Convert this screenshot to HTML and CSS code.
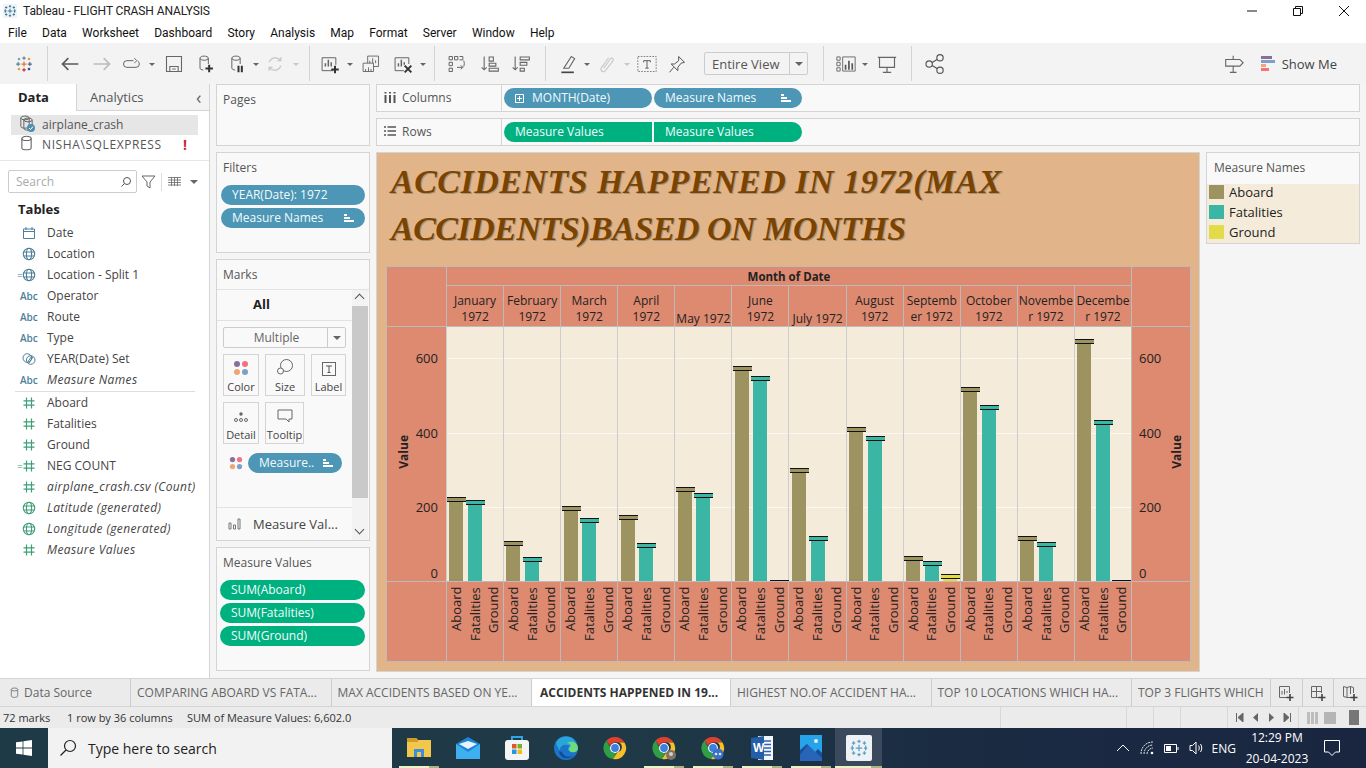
FILE: index.html
```html
<!DOCTYPE html>
<html lang="en">
<head>
    <meta charset="UTF-8">
    <title>Tableau - FLIGHT CRASH ANALYSIS</title>
    <link rel="stylesheet" href="styles.css">
</head>
<body>
<svg class="defs" width="0" height="0">
    <symbol id="crosses" viewBox="0 0 24 24">
        <path d="M12 8v8M8 12h8M12 2v4M10 4h4M12 18v4M10 20h4M4 9v6M2 12h4M20 9v6M18 12h4M5.500 4v4M3.500 6h4M18.500 4v4M16.500 6h4M5.500 16v4M3.500 18h4M18.500 16v4M16.500 18h4" fill="none" stroke="currentColor" stroke-width="1.500"/>
    </symbol>
    <symbol id="globe" viewBox="0 0 14 14">
        <g fill="none" stroke="currentColor" stroke-width="1.100"><circle cx="7" cy="7" r="5.700"/><ellipse cx="7" cy="7" rx="2.600" ry="5.700"/><path d="M1.500 5h11M1.500 9h11"/></g>
    </symbol>
    <symbol id="hash" viewBox="0 0 14 14">
        <path d="M4.500 1.500v11M9.500 1.500v11M1.500 4.800h11M1.500 9.200h11" fill="none" stroke="currentColor" stroke-width="1.200"/>
    </symbol>
    <symbol id="sorted" viewBox="0 0 12 10">
        <path d="M1 1h3v2H1zM1 4h6v2H1zM1 7h10v2H1z" fill="currentColor"/>
    </symbol>
    <symbol id="can" viewBox="0 0 14 18">
        <g fill="none" stroke="currentColor" stroke-width="1.200"><ellipse cx="7" cy="3.500" rx="5" ry="2.300"/><path d="M2 3.500v10c0 1.500 2 2.300 5 2.300s5-.8 5-2.300v-10"/></g>
    </symbol>
    <symbol id="chrome" viewBox="0 0 24 24">
        <path d="M12 1a11 11 0 0 1 9.500 5.500H12a5.500 5.500 0 0 0-5 3.200L3.500 4.500A11 11 0 0 1 12 1z" fill="#e0412f"/>
        <path d="M3.500 4.500L7.400 12a5 5 0 0 0 5.900 5L10 23A11 11 0 0 1 3.500 4.500z" fill="#2f9e44"/>
        <path d="M21.500 6.500A11 11 0 0 1 10 23l4.600-7a5 5 0 0 0 1.300-9.500z" fill="#f6c026"/>
        <circle cx="12" cy="12" r="5" fill="#fff"/><circle cx="12" cy="12" r="3.900" fill="#3d7fe0"/>
    </symbol>
</svg>

<div class="titlebar">
    <svg class="app-ico" viewBox="0 0 24 24"><rect width="24" height="24" fill="#eef3f6"/><use href="#crosses" width="24" height="24" class="navy"/></svg>
    <span class="app-title">Tableau - FLIGHT CRASH ANALYSIS</span>
    <div class="win">
        <svg viewBox="0 0 12 12"><path d="M1 6h10" stroke="#111" fill="none"/></svg>
        <svg viewBox="0 0 12 12"><path d="M1.500 3.500h7v7h-7zM3.500 3.500v-2h7v7h-2" stroke="#111" fill="none"/></svg>
        <svg viewBox="0 0 12 12"><path d="M1 1l10 10M11 1L1 11" stroke="#111" fill="none"/></svg>
    </div>
</div>
<nav class="menubar">
    <span>File</span><span>Data</span><span>Worksheet</span><span>Dashboard</span><span>Story</span><span>Analysis</span><span>Map</span><span>Format</span><span>Server</span><span>Window</span><span>Help</span>
</nav>

<div class="toolbar">
    <svg class="ico ml12" viewBox="0 0 24 24"><g fill="none" stroke-width="1.500"><path d="M12 9v6M9 12h6" stroke="#e8762c"/><path d="M12 3v4M10 5h4" stroke="#5b879b"/><path d="M12 17v4M10 19h4" stroke="#c72035"/><path d="M5 9.500v5M2.500 12h5" stroke="#59879b"/><path d="M19 9.500v5M16.500 12h5" stroke="#5b6591"/><path d="M6 4.500v3M4.500 6h3" stroke="#7099a6"/><path d="M18 4.500v3M16.500 6h3" stroke="#eb912b"/><path d="M6 16.500v3M4.500 18h3" stroke="#eb912b"/><path d="M18 16.500v3M16.500 18h3" stroke="#1f447a"/></g></svg>
    <i class="sep ml11"></i>
    <svg class="ico ml10" viewBox="0 0 24 24"><path d="M22 12H3M10 5l-7 7 7 7" fill="none" stroke="#5a5a5a" stroke-width="2"/></svg>
    <svg class="ico ml8" viewBox="0 0 24 24"><path d="M2 12h19M14 5l7 7-7 7" fill="none" stroke="#bcbcbc" stroke-width="2"/></svg>
    <svg class="ico ml5" viewBox="0 0 24 24"><path d="M15 8H7a4 4 0 0 0 0 8h11a4 4 0 0 0 4-4 4 4 0 0 0-2-3.500M16 5l3 3-3 3" fill="none" stroke="#666" stroke-width="1.200"/></svg>
    <i class="caret ml5"></i>
    <svg class="ico ml6" viewBox="0 0 24 24"><path d="M3 3h18v18H3zM7 21v-6h10v6M10 18h4" fill="none" stroke="#666" stroke-width="1.300"/></svg>
    <svg class="ico ml7" viewBox="0 0 24 24"><g fill="none"><path d="M16 12V5c0-1.500-2.500-2.500-5-2.500S6 3.500 6 5v12c0 1.200 2 2 4 2.300M6 5c0 1.500 2.500 2.500 5 2.500S16 6.500 16 5" stroke="#666" stroke-width="1.200"/><path d="M17 13v9M12.500 17.500h9" stroke="#333" stroke-width="2.400"/></g></svg>
    <svg class="ico ml7" viewBox="0 0 24 24"><g fill="none"><path d="M17 12V5c0-1.500-2.500-2.500-5-2.500S7 3.500 7 5v12c0 1.200 2 2 4 2.300M7 5c0 1.500 2.500 2.500 5 2.500S17 6.500 17 5" stroke="#666" stroke-width="1.200"/><path d="M15 14v8M19 14v8" stroke="#333" stroke-width="2.400"/></g></svg>
    <i class="caret ml4"></i>
    <svg class="ico ml3" viewBox="0 0 24 24"><path d="M5 10a8 8 0 0 1 14-2M19 14a8 8 0 0 1-14 2M19 4v4h-4M5 20v-4h4" fill="none" stroke="#c6c6c6" stroke-width="1.500"/></svg>
    <i class="caret off ml5"></i>
    <i class="sep ml9"></i>
    <svg class="ico ml8" viewBox="0 0 24 24"><g fill="none"><path d="M16 20H2.500V4.500H19V13" stroke="#666" stroke-width="1.200"/><path d="M6.500 15v-4M10 15V7M13.500 15v-5" stroke="#666" stroke-width="1.800"/><path d="M18 14v9M13.500 18.500h9" stroke="#333" stroke-width="2.400"/></g></svg>
    <i class="caret ml4"></i>
    <svg class="ico ml5" viewBox="0 0 24 24"><path d="M8 11V2.500h13V15h-6M10.500 11V8M14 11V5M17.500 11V7.500M2.500 11H15v10H2.500zM5.500 21v-3M9 21v-5M12 21v-3" fill="none" stroke="#666" stroke-width="1.100"/></svg>
    <svg class="ico ml8" viewBox="0 0 24 24"><g fill="none"><path d="M13 20H2.500V4.500H19V12" stroke="#666" stroke-width="1.200"/><path d="M6.500 15v-4M10 15V7M13.500 13V10" stroke="#666" stroke-width="1.800"/><path d="M14 14l8 8M22 14l-8 8" stroke="#333" stroke-width="2.400"/></g></svg>
    <i class="caret ml4"></i>
    <i class="sep ml7"></i>
    <svg class="ico ml10" viewBox="0 0 24 24"><path d="M2.500 3h4v4h-4zM9 3h4v4H9zM2.500 10h4v4h-4zM2.500 17h4v4h-4zM15 3h4v4h-4M12 16h7l-2.500-2.500M19 16l-2.500 2.500M20 8c1 2 1 5 0 7" fill="none" stroke="#666" stroke-width="1.200"/></svg>
    <svg class="ico ml9" viewBox="0 0 24 24"><path d="M5 3v16M2 16l3 3 3-3M11 3.500h5v5h-5zM11 11h8v3.500h-8zM11 17h11v3.500H11z" fill="none" stroke="#666" stroke-width="1.300"/></svg>
    <svg class="ico ml7" viewBox="0 0 24 24"><path d="M5 3v16M2 16l3 3 3-3M11 3.500h11V7H11zM11 10h8v3.500h-8zM11 17h5v3.500h-5z" fill="none" stroke="#666" stroke-width="1.300"/></svg>
    <i class="sep ml12"></i>
    <svg class="ico ml10" viewBox="0 0 24 24"><path d="M7 17L16 3l4 2.500-7 11.500z" fill="none" stroke="#666" stroke-width="1.300"/><path d="M4 22h15" stroke="#444" stroke-width="2"/></svg>
    <i class="caret ml1"></i>
    <svg class="ico ml4" viewBox="0 0 24 24"><path d="M8 17l8-11c2-2.500 5 0 3 2.500L10 20c-3 3-7-.5-4.500-4L14 4.500" fill="none" stroke="#c9c9c9" stroke-width="1.400"/></svg>
    <i class="caret off ml4"></i>
    <svg class="ico ml4" viewBox="0 0 24 24"><rect x="1" y="3" width="22" height="18" fill="none" stroke="#777" stroke-width="1.100" stroke-dasharray="2 1.500"/><path d="M8 8h8M12 8v9M10 17h4M8 8v2M16 8v2" fill="none" stroke="#555" stroke-width="1.100"/></svg>
    <svg class="ico ml6" viewBox="0 0 24 24"><path d="M14 3l7 7-4 1-4 5 0 4-8-8 4 0 5-4zM8 16l-5 6" fill="none" stroke="#555" stroke-width="1.200"/></svg>
    <div class="fit ml15"><span>Entire View</span><b><i class="caret"></i></b></div>
    <i class="sep ml15"></i>
    <svg class="ico ml10" viewBox="0 0 24 24"><path d="M1 3.500h4v4H1zM1 10h4v4H1zM1 16.500h4v4H1zM8 3.500h15v17H8z" fill="none" stroke="#666" stroke-width="1.100"/><path d="M11.500 19v-6M15.500 19V8M19.500 19v-8" stroke="#555" stroke-width="2"/></svg>
    <i class="caret ml1"></i>
    <svg class="ico ml6" viewBox="0 0 24 24"><path d="M1 4h22M3 4v12h18V4M12 16v6M7 22h10" fill="none" stroke="#666" stroke-width="1.400"/></svg>
    <i class="sep ml12"></i>
    <svg class="ico ml11" viewBox="0 0 24 24"><g fill="none" stroke="#555" stroke-width="1.400"><circle cx="5" cy="12" r="3.800"/><circle cx="18" cy="4.500" r="3.800"/><circle cx="18" cy="19.500" r="3.800"/><path d="M8.500 10.300l6-3.800M8.500 13.700l6 3.800"/></g></svg>
    <svg class="ico push" viewBox="0 0 24 24"><path d="M2 6.500h17l4 4-4 4H2zM11 6.500V2M11 14.500V22M7 22h8" fill="none" stroke="#666" stroke-width="1.300"/></svg>
    <div class="showme">
        <svg width="14" height="16" viewBox="0 0 14 16"><rect width="11" height="3" fill="#8a6f9c"/><rect y="4" width="14" height="3" fill="#7e9fc7"/><rect y="8" width="5" height="3" fill="#f1a572"/><rect y="12" width="8" height="3" fill="#f4727f"/></svg>
        <span>Show Me</span>
    </div>
</div>

<div class="workspace">
    <aside class="sidebar">
        <div class="side-tabs"><span class="side-tab on">Data</span><span class="side-tab">Analytics</span><span class="collapse">‹</span></div>
        <div class="source on">
            <svg class="src-ico" viewBox="0 0 18 18"><use href="#can" x="1" y="0" width="12" height="15" class="grey"/><use href="#can" x="4" y="2" width="12" height="15" class="grey"/><circle cx="13" cy="13" r="4" fill="#4f8eb0"/><path d="M11 13l1.500 1.500 2.500-3" stroke="#fff" fill="none"/></svg>
            <span>airplane_crash</span>
        </div>
        <div class="source">
            <svg class="src-ico" viewBox="0 0 18 18"><use href="#can" x="2" y="0" width="13" height="17" class="grey"/></svg>
            <span class="server">NISHA\SQLEXPRESS</span><b class="warn">!</b>
        </div>
        <div class="search-row">
            <div class="search"><span>Search</span><svg width="12" height="12" viewBox="0 0 12 12"><circle cx="7" cy="5" r="3.500" fill="none" stroke="#555"/><path d="M4.500 7.500L1.500 10.500" stroke="#555"/></svg></div>
            <svg class="funnel" width="15" height="14" viewBox="0 0 15 14"><path d="M1 1h13L9 7v6l-3-2V7z" fill="none" stroke="#666"/></svg>
            <i class="vsep"></i>
            <svg width="13" height="9" viewBox="0 0 13 9"><path d="M0 .5h13M0 3h13M0 5.500h13M0 8h13M3.500 0v9M6.500 0v9M9.500 0v9" stroke="#666" stroke-width=".8"/></svg>
            <i class="caret small"></i>
        </div>
        <h3 class="tables">Tables</h3>
        <ul class="fields">
            <li><svg class="blue" width="14" height="14" viewBox="0 0 14 14"><path d="M1.500 3h11v9.500h-11zM1.500 5.500h11M4 1v3M10 1v3" fill="none" stroke="currentColor"/></svg><span>Date</span></li>
            <li><svg class="blue" width="14" height="14"><use href="#globe"/></svg><span>Location</span></li>
            <li><em class="eq blue">=</em><svg class="blue" width="14" height="14"><use href="#globe"/></svg><span>Location - Split 1</span></li>
            <li><b class="abc">Abc</b><span>Operator</span></li>
            <li><b class="abc">Abc</b><span>Route</span></li>
            <li><b class="abc">Abc</b><span>Type</span></li>
            <li><svg class="blue" width="14" height="14" viewBox="0 0 14 14"><g fill="none" stroke="currentColor"><circle cx="5.300" cy="6" r="4.300"/><circle cx="8.700" cy="8" r="4.300"/><path d="M5 11l5-7M7 11l4-6"/></g></svg><span>YEAR(Date) Set</span></li>
            <li><b class="abc">Abc</b><span><em>Measure Names</em></span></li>
            <li class="rule"></li>
            <li><svg class="green" width="14" height="14"><use href="#hash"/></svg><span>Aboard</span></li>
            <li><svg class="green" width="14" height="14"><use href="#hash"/></svg><span>Fatalities</span></li>
            <li><svg class="green" width="14" height="14"><use href="#hash"/></svg><span>Ground</span></li>
            <li><em class="eq green">=</em><svg class="green" width="14" height="14"><use href="#hash"/></svg><span>NEG COUNT</span></li>
            <li><svg class="green" width="14" height="14"><use href="#hash"/></svg><span><em>airplane_crash.csv (Count)</em></span></li>
            <li><svg class="green" width="14" height="14"><use href="#globe"/></svg><span><em>Latitude (generated)</em></span></li>
            <li><svg class="green" width="14" height="14"><use href="#globe"/></svg><span><em>Longitude (generated)</em></span></li>
            <li><svg class="green" width="14" height="14"><use href="#hash"/></svg><span><em>Measure Values</em></span></li>
        </ul>
    </aside>

    <section class="cards">
        <div class="card pages"><h4>Pages</h4></div>
        <div class="card filters">
            <h4>Filters</h4>
            <div class="pill blue-pill wide">YEAR(Date): 1972</div>
            <div class="pill blue-pill wide">Measure Names<svg class="sort" viewBox="0 0 12 10"><use href="#sorted"/></svg></div>
        </div>
        <div class="card marks">
            <h4>Marks</h4>
            <div class="marks-body">
                <div class="marks-main">
                    <div class="all">All</div>
                    <div class="mark-type"><span>Multiple</span><b><i class="caret small"></i></b></div>
                    <div class="mark-btns">
                        <div class="mbtn m-36"><svg width="16" height="16" viewBox="0 0 16 16"><circle cx="4" cy="4" r="3" fill="#8a6f9c"/><circle cx="12" cy="4" r="3" fill="#f4727f"/><circle cx="4" cy="12" r="3" fill="#f1a572"/><circle cx="12" cy="12" r="3" fill="#7e9fc7"/></svg><span>Color</span></div>
                        <div class="mbtn m-40"><svg width="18" height="18" viewBox="0 0 18 18"><g fill="none" stroke="#666"><circle cx="10.500" cy="7.500" r="6"/><circle cx="4.500" cy="13" r="3" fill="#fafafa"/></g></svg><span>Size</span></div>
                        <div class="mbtn m-35"><svg width="14" height="14" viewBox="0 0 14 14"><rect x=".5" y=".5" width="13" height="13" fill="none" stroke="#666"/><path d="M4 4h6M7 4v6.500M5.500 10.500h3" fill="none" stroke="#555"/></svg><span>Label</span></div>
                        <div class="mbtn m-36"><svg width="16" height="16" viewBox="0 0 16 16"><g fill="none" stroke="#666"><circle cx="3" cy="12" r="1.500"/><circle cx="8" cy="12" r="1.500"/><circle cx="13" cy="12" r="1.500"/></g><circle cx="8" cy="6" r="1.700" fill="#666"/></svg><span>Detail</span></div>
                        <div class="mbtn m-39"><svg width="16" height="16" viewBox="0 0 16 16"><path d="M1 2h14v9h-3v3l-3-3H1z" fill="none" stroke="#666"/></svg><span>Tooltip</span></div>
                    </div>
                    <div class="enc">
                        <svg width="14" height="14" viewBox="0 0 16 16"><circle cx="4" cy="4" r="3" fill="#8a6f9c"/><circle cx="12" cy="4" r="3" fill="#f4727f"/><circle cx="4" cy="12" r="3" fill="#f1a572"/><circle cx="12" cy="12" r="3" fill="#7e9fc7"/></svg>
                        <div class="pill blue-pill enc-pill">Measure..<svg class="sort" viewBox="0 0 12 10"><use href="#sorted"/></svg></div>
                    </div>
                    <div class="mv-card">
                        <svg width="13" height="12" viewBox="0 0 13 12"><path d="M1 5h2v6H1zM5.500 7h2v4h-2zM10 1h2v10h-2z" fill="none" stroke="#777"/></svg>
                        <span>Measure Val...</span>
                    </div>
                </div>
                <div class="scroll"><span class="up"></span><span class="thumb"></span><span class="down"></span></div>
            </div>
        </div>
        <div class="card mvals">
            <h4>Measure Values</h4>
            <div class="pill green-pill full">SUM(Aboard)</div>
            <div class="pill green-pill full">SUM(Fatalities)</div>
            <div class="pill green-pill full">SUM(Ground)</div>
        </div>
    </section>

    <main class="main">
        <div class="shelf">
            <div class="shelf-label"><svg width="12" height="11" viewBox="0 0 12 11"><path d="M1.500 3v8M6 3v8M10.500 3v8M1.500 0v1.500M6 0v1.500M10.500 0v1.500" stroke="#555" stroke-width="2"/></svg><span>Columns</span></div>
            <div class="shelf-pills">
                <div class="pill blue-pill first"><svg class="plus" width="9" height="9" viewBox="0 0 9 9"><path d="M.5.500h8v8h-8zM4.500 2v5M2 4.500h5" fill="none" stroke="#fff"/></svg>MONTH(Date)</div>
                <div class="pill blue-pill second">Measure Names<svg class="sort" viewBox="0 0 12 10"><use href="#sorted"/></svg></div>
            </div>
        </div>
        <div class="shelf">
            <div class="shelf-label"><svg width="12" height="10" viewBox="0 0 12 10"><path d="M0 1h2M3.500 1H12M0 5h2M3.500 5H12M0 9h2M3.500 9H12" stroke="#555" stroke-width="1.600"/></svg><span>Rows</span></div>
            <div class="shelf-pills">
                <div class="pill green-pill first left-round">Measure Values</div>
                <div class="pill green-pill second right-round">Measure Values</div>
            </div>
        </div>
        <div class="stage">
            <div class="sheet">
                <h1 class="sheet-title">ACCIDENTS HAPPENED IN 1972(MAX<br><span class="title-tight">ACCIDENTS)BASED ON MONTHS</span></h1>
                <div class="viz">
                    <div class="vh-corner"></div>
                    <div class="vh-title">Month of Date</div>
                    <div class="vh-corner right"></div>
                    <div class="vh-month">January<br>1972</div>
                    <div class="vh-month">February<br>1972</div>
                    <div class="vh-month">March<br>1972</div>
                    <div class="vh-month">April<br>1972</div>
                    <div class="vh-month low">May 1972</div>
                    <div class="vh-month">June<br>1972</div>
                    <div class="vh-month low">July 1972</div>
                    <div class="vh-month">August<br>1972</div>
                    <div class="vh-month">Septemb<br>er 1972</div>
                    <div class="vh-month">October<br>1972</div>
                    <div class="vh-month">Novembe<br>r 1972</div>
                    <div class="vh-month">Decembe<br>r 1972</div>

                    <div class="axis">
                        <b class="axis-name">Value</b>
                        <span class="tick t600">600</span><span class="tick t400">400</span><span class="tick t200">200</span><span class="tick t0">0</span>
                    </div>
                    <div class="month"><div class="band"><div class="bar a" style="height:81px"></div></div><div class="band"><div class="bar f" style="height:78px"></div></div><div class="band"></div></div>
                    <div class="month"><div class="band"><div class="bar a" style="height:37px"></div></div><div class="band"><div class="bar f" style="height:21px"></div></div><div class="band"></div></div>
                    <div class="month"><div class="band"><div class="bar a" style="height:72px"></div></div><div class="band"><div class="bar f" style="height:60px"></div></div><div class="band"></div></div>
                    <div class="month"><div class="band"><div class="bar a" style="height:63px"></div></div><div class="band"><div class="bar f" style="height:35px"></div></div><div class="band"></div></div>
                    <div class="month"><div class="band"><div class="bar a" style="height:91px"></div></div><div class="band"><div class="bar f" style="height:85px"></div></div><div class="band"></div></div>
                    <div class="month"><div class="band"><div class="bar a" style="height:212px"></div></div><div class="band"><div class="bar f" style="height:202px"></div></div><div class="band"><div class="bar zero"></div></div></div>
                    <div class="month"><div class="band"><div class="bar a" style="height:110px"></div></div><div class="band"><div class="bar f" style="height:42px"></div></div><div class="band"></div></div>
                    <div class="month"><div class="band"><div class="bar a" style="height:151px"></div></div><div class="band"><div class="bar f" style="height:142px"></div></div><div class="band"></div></div>
                    <div class="month"><div class="band"><div class="bar a" style="height:22px"></div></div><div class="band"><div class="bar f" style="height:17px"></div></div><div class="band"><div class="bar g" style="height:4px"></div></div></div>
                    <div class="month"><div class="band"><div class="bar a" style="height:191px"></div></div><div class="band"><div class="bar f" style="height:173px"></div></div><div class="band"></div></div>
                    <div class="month"><div class="band"><div class="bar a" style="height:42px"></div></div><div class="band"><div class="bar f" style="height:36px"></div></div><div class="band"></div></div>
                    <div class="month"><div class="band"><div class="bar a" style="height:239px"></div></div><div class="band"><div class="bar f" style="height:158px"></div></div><div class="band"><div class="bar zero"></div></div></div>
                    <div class="axis right">
                        <span class="tick t600">600</span><span class="tick t400">400</span><span class="tick t200">200</span><span class="tick t0">0</span>
                        <b class="axis-name">Value</b>
                    </div>

                    <div class="vf-corner"></div>
                    <div class="names"><span>Aboard</span><span>Fatalities</span><span>Ground</span></div>
                    <div class="names"><span>Aboard</span><span>Fatalities</span><span>Ground</span></div>
                    <div class="names"><span>Aboard</span><span>Fatalities</span><span>Ground</span></div>
                    <div class="names"><span>Aboard</span><span>Fatalities</span><span>Ground</span></div>
                    <div class="names"><span>Aboard</span><span>Fatalities</span><span>Ground</span></div>
                    <div class="names"><span>Aboard</span><span>Fatalities</span><span>Ground</span></div>
                    <div class="names"><span>Aboard</span><span>Fatalities</span><span>Ground</span></div>
                    <div class="names"><span>Aboard</span><span>Fatalities</span><span>Ground</span></div>
                    <div class="names"><span>Aboard</span><span>Fatalities</span><span>Ground</span></div>
                    <div class="names"><span>Aboard</span><span>Fatalities</span><span>Ground</span></div>
                    <div class="names"><span>Aboard</span><span>Fatalities</span><span>Ground</span></div>
                    <div class="names"><span>Aboard</span><span>Fatalities</span><span>Ground</span></div>
                    <div class="vf-corner end"></div>
                </div>
            </div>
            <div class="legend">
                <h4>Measure Names</h4>
                <div class="legend-body">
                    <div class="leg"><i class="sw a"></i>Aboard</div>
                    <div class="leg"><i class="sw f"></i>Fatalities</div>
                    <div class="leg"><i class="sw g"></i>Ground</div>
                </div>
            </div>
        </div>
    </main>
</div>

<div class="tabs">
    <div class="tab src"><svg width="9" height="12"><use href="#can" width="9" height="12" class="grey"/></svg>Data Source</div>
    <div class="tab">COMPARING ABOARD VS FATA...</div>
    <div class="tab">MAX ACCIDENTS BASED ON YE...</div>
    <div class="tab on">ACCIDENTS HAPPENED IN 19...</div>
    <div class="tab">HIGHEST NO.OF ACCIDENT HA...</div>
    <div class="tab">TOP 10 LOCATIONS WHICH HA...</div>
    <div class="tab last">TOP 3 FLIGHTS WHICH</div>
    <div class="tab-btn"><svg width="16" height="16" viewBox="0 0 16 16"><g fill="none"><path d="M9 12.500H1.500v-11h10V8" stroke="#666"/><path d="M4 9.500V6M6.500 9.500V4M9 8V6" stroke="#666"/><path d="M12 9v7M8.500 12.500h7" stroke="#444" stroke-width="1.600"/></g></svg></div>
    <div class="tab-btn"><svg width="16" height="16" viewBox="0 0 16 16"><g fill="none"><path d="M9 12.500H1.500v-11h10V8M1.500 6.500h10M6.500 1.500v11" stroke="#666"/><path d="M12 9v7M8.500 12.500h7" stroke="#444" stroke-width="1.600"/></g></svg></div>
    <div class="tab-btn"><svg width="16" height="16" viewBox="0 0 16 16"><g fill="none"><path d="M9 12.500H5l-3.500-1v-10l3.500 1 3.500-1 3 1V8M5 2.500v10M8.500 1.500V9" stroke="#666"/><path d="M12 9v7M8.500 12.500h7" stroke="#444" stroke-width="1.600"/></g></svg></div>
</div>

<div class="status">
    <span class="st s1">72 marks</span><span class="st s2">1 row by 36 columns</span><span class="st s3">SUM of Measure Values: 6,602.0</span>
    <i class="seg w126"></i><i class="seg w27"></i><i class="seg w27"></i><i class="seg w47"></i>
    <div class="seg nav">
        <svg width="9" height="9" viewBox="0 0 9 9"><path d="M1.500 0v9M8 0v9L3 4.500z" stroke="#666" fill="#666"/></svg>
        <svg width="9" height="9" viewBox="0 0 9 9"><path d="M7 0v9L2 4.500z" fill="#666"/></svg>
        <svg width="9" height="9" viewBox="0 0 9 9"><path d="M2 0v9l5-4.500z" fill="#666"/></svg>
        <svg width="9" height="9" viewBox="0 0 9 9"><path d="M7.500 0v9M1 0v9l5-4.500z" stroke="#666" fill="#666"/></svg>
    </div>
    <div class="seg views">
        <i class="v-grid"></i><i class="v-mid"></i><i class="v-full"></i>
    </div>
</div>

<footer class="taskbar">
    <div class="start"><svg width="16" height="16" viewBox="0 0 16 16"><path d="M0 2.300L6.600 1.400v6.100H0zM7.400 1.300L16 0v7.500H7.400zM0 8.400h6.600v6.200L0 13.700zM7.400 8.400H16V16l-8.600-1.200z" fill="#fff"/></svg></div>
    <div class="tsearch"><svg width="18" height="18" viewBox="0 0 18 18"><circle cx="11" cy="7" r="5.500" fill="none" stroke="#222" stroke-width="1.200"/><path d="M7 11l-5.500 5.500" stroke="#222" stroke-width="1.200"/></svg><span>Type here to search</span></div>
    <div class="apps">
        <div class="tapp open"><svg width="24" height="22" viewBox="0 0 24 22"><path d="M0 1h9l2 2h13v17H0z" fill="#f3c64c"/><path d="M0 1h9l2 2v2H0z" fill="#d39a2c"/><path d="M7 12h10v8H7z" fill="#3b8fd8"/><path d="M10 15h4v5h-4z" fill="#f3c64c"/></svg></div>
        <div class="tapp"><svg width="24" height="22" viewBox="0 0 24 22"><path d="M0 7l12-7 12 7v15H0z" fill="#1d84d8"/><path d="M0 7l12 8 12-8v15H0z" fill="#3fb0ef"/><path d="M3 7l9-3 9 3-9 5z" fill="#e8f4fb"/></svg></div>
        <div class="tapp"><svg width="24" height="26" viewBox="0 0 24 26"><path d="M7 6V2h10v4" fill="none" stroke="#2ea6e6" stroke-width="2"/><rect y="5" width="24" height="20" rx="3" fill="#f4f4f4"/><rect x="7" y="9" width="4.500" height="4.500" fill="#e8542a"/><rect x="12.500" y="9" width="4.500" height="4.500" fill="#6fb52c"/><rect x="7" y="14.500" width="4.500" height="4.500" fill="#1d9be0"/><rect x="12.500" y="14.500" width="4.500" height="4.500" fill="#f5b91a"/></svg></div>
        <div class="tapp"><svg width="24" height="24" viewBox="0 0 24 24"><circle cx="12" cy="12" r="12" fill="#1b74c9"/><path d="M2 7a11 11 0 0 1 20 0c2 5-2 9-6 8-3-1-2-4 0-5-5-3-11 0-10 5-1-2-3-4-4-8z" fill="#2aa5d8"/><path d="M24 12c0 4-4 5-7 4-3-1-2-4-1-5 2-1 0-4-3-4 5-3 11 0 11 5z" fill="#6fdc7b"/><path d="M8 16c1 4 6 6 11 4-3 3-9 3-12 0-1-1-2-3-2-5z" fill="#0e4f94"/></svg></div>
        <div class="tapp"><svg width="24" height="24"><use href="#chrome"/></svg></div>
        <div class="tapp open"><svg width="24" height="24" viewBox="0 0 24 24"><use href="#chrome"/><circle cx="19" cy="19" r="5" fill="#7c7466"/><circle cx="19" cy="18" r="2" fill="#d8d0c0"/></svg></div>
        <div class="tapp open"><svg width="24" height="24" viewBox="0 0 24 24"><use href="#chrome"/><circle cx="17" cy="18" r="5.500" fill="#3a71c9"/><circle cx="15" cy="18" r="1.300" fill="#dfe9f8"/><circle cx="19" cy="18" r="1.300" fill="#dfe9f8"/></svg></div>
        <div class="tapp open"><svg width="22" height="26" viewBox="0 0 22 26"><rect x="7" y="1" width="15" height="24" fill="#f4f7fb"/><path d="M11 6h9M11 9.500h9M11 13h9M11 16.500h9M11 20h9" stroke="#2b63b5" stroke-width="1.500"/><path d="M0 3l13-2v24L0 23z" fill="#245ea8"/><text x="2" y="17" class="word">W</text></svg></div>
        <div class="tapp open"><svg width="22" height="26" viewBox="0 0 22 26"><rect width="22" height="26" fill="#27a3ea"/><path d="M0 15l7-6 8 8 3-3 4 4v8H0z" fill="#184f9c"/><path d="M8 10l14 13v3H0v-6z" fill="#2f6fc4" opacity=".7"/><circle cx="16" cy="6" r="2" fill="#e3f4fc"/></svg></div>
        <div class="tapp active"><svg width="26" height="26" viewBox="0 0 26 26"><rect width="26" height="26" rx="2" fill="#eef2f5"/><use href="#crosses" x="3" y="3" width="20" height="20" class="sky"/></svg></div>
    </div>
    <div class="tray">
        <svg class="t-up" width="14" height="8" viewBox="0 0 14 8"><path d="M1 7l6-6 6 6" fill="none" stroke="#fff"/></svg>
        <svg width="14" height="14" viewBox="0 0 14 14"><path d="M1 13C1 6 6 1 13 1M4 13c0-5 4-9 9-9M7 13c0-3 3-6 6-6" fill="none" stroke="#dfe4ea" stroke-dasharray="2 .8"/><circle cx="12" cy="12" r="1.300" fill="#fff"/></svg>
        <svg width="15" height="9" viewBox="0 0 15 9"><path d="M.5.500h12v8H.5z" fill="none" stroke="#fff"/><path d="M2 2h5v5H2zM13.500 3h1v3h-1z" fill="#fff"/></svg>
        <svg width="16" height="14" viewBox="0 0 16 14"><path d="M1 4.500h2.500L7 1v12L3.500 9.500H1zM9.500 4.500c1 1.500 1 3.500 0 5M11.500 3c1.700 2.500 1.700 5.500 0 8" fill="none" stroke="#fff"/></svg>
        <span class="lang">ENG</span>
        <div class="clock"><span>12:29 PM</span><span>20-04-2023</span></div>
        <svg class="notif" width="16" height="16" viewBox="0 0 16 16"><path d="M.5.500h15v11.500h-4l-3.500 3.500-3.500-3.500h-4z" fill="none" stroke="#fff"/></svg>
    </div>
</footer>
</body>
</html>
```

FILE: styles.css
```css
* {
    box-sizing: border-box;
}
html, body {
    margin: 0;
    padding: 0;
}
body {
    width: 1366px;
    height: 768px;
    overflow: hidden;
    font-family: "Open Sans", "Noto Sans", sans-serif;
    font-size: 12px;
    color: #333;
    background: #fff;
    display: flex;
    flex-direction: column;
}
.defs {
    position: absolute;
}
h1, h3, h4, ul {
    margin: 0;
    padding: 0;
    font-weight: normal;
}
.navy { color: #2f6f8f; }
.sky { color: #5aa0c8; }
.grey { color: #666; }
.blue { color: #4e7f98; }
.green { color: #3f9e78; }

/* window chrome */
.titlebar {
    height: 22px;
    flex: none;
    display: flex;
    align-items: center;
    padding-left: 3px;
    font-family: Roboto, sans-serif;
    font-size: 12px;
    letter-spacing: -.1px;
    color: #222;
}
.app-ico {
    width: 14px;
    height: 14px;
    margin-right: 6px;
}
.win {
    margin-left: auto;
    display: flex;
    gap: 34px;
    padding-right: 16px;
}
.win svg {
    width: 12px;
    height: 12px;
}
.menubar {
    height: 21px;
    flex: none;
    display: flex;
    align-items: center;
    gap: 15.200px;
    padding-left: 8px;
    color: #111;
    font-family: Roboto, sans-serif;
    font-size: 12px;
}

/* toolbar */
.toolbar {
    height: 41px;
    flex: none;
    background: #f3f3f3;
    display: flex;
    align-items: center;
}
.ico {
    width: 24px;
    height: 24px;
    padding: 2px;
    flex: none;
}
.sep {
    width: 1px;
    height: 35px;
    background: #d4d4d4;
    flex: none;
}
.caret {
    display: inline-block;
    width: 0;
    height: 0;
    margin-top: 1px;
    border-left: 4px solid transparent;
    border-right: 4px solid transparent;
    border-top: 4px solid #666;
    flex: none;
}
.caret.off { border-top-color: #c8c8c8; }
.caret.small {
    border-width: 4px 4px 0;
}
.toolbar > .caret {
    border-width: 3px 3px 0;
    margin-right: 1px;
}
.ml1 { margin-left: 1px; }
.ml3 { margin-left: 3px; }
.ml4 { margin-left: 4px; }
.ml5 { margin-left: 5px; }
.ml6 { margin-left: 6px; }
.ml7 { margin-left: 7px; }
.ml8 { margin-left: 8px; }
.ml9 { margin-left: 9px; }
.ml10 { margin-left: 10px; }
.ml11 { margin-left: 11px; }
.ml12 { margin-left: 12px; }
.ml15 { margin-left: 15px; }
.toolbar > .caret.ml1 { margin-left: 4px; }
.toolbar > .caret.ml4 { margin-left: 5px; }
.toolbar > .caret.ml5 { margin-left: 6px; }
.fit {
    width: 104px;
    height: 23px;
    flex: none;
    border: 1px solid #ccc;
    border-radius: 2px;
    display: flex;
    align-items: center;
    color: #555;
    font-size: 13px;
}
.fit span {
    flex: 1;
    padding-left: 7px;
}
.fit b {
    width: 18px;
    height: 100%;
    border-left: 1px solid #ccc;
    display: flex;
    align-items: center;
    justify-content: center;
}
.push {
    margin-left: auto;
    margin-right: 15px;
}
.showme {
    display: flex;
    align-items: center;
    gap: 7px;
    margin-right: 29px;
    font-size: 13px;
    color: #444;
}

/* workspace */
.workspace {
    height: 594px;
    flex: none;
    display: flex;
    background: #f5f5f5;
}
.sidebar {
    width: 210px;
    flex: none;
    background: #fff;
    border-right: 1px solid #d4d4d4;
}
.side-tabs {
    height: 27px;
    display: flex;
    align-items: center;
    background: #f3f3f3;
    border-bottom: 1px solid #d4d4d4;
}
.side-tab {
    width: 77px;
    height: 27px;
    line-height: 26px;
    font-size: 13px;
    color: #555;
    padding-left: 13px;
}
.side-tab + .side-tab {
    flex: 1;
}
.side-tab.on {
    background: #fff;
    border-right: 1px solid #d4d4d4;
    padding-left: 18px;
    font-weight: 700;
    color: #222;
}
.collapse {
    width: 13px;
    font-size: 18px;
    line-height: 22px;
    color: #666;
}
.source {
    height: 20px;
    margin-left: 11px;
    width: 187px;
    display: flex;
    align-items: center;
    padding-bottom: 2px;
    color: #555;
}
.source.on {
    margin-top: 4px;
    background: #e6e6e6;
}
.src-ico {
    width: 18px;
    height: 18px;
    margin: 0 6px 0 7px;
    flex: none;
}
.server {
    letter-spacing: .6px;
}
.warn {
    margin-left: auto;
    margin-right: 11px;
    color: #c0293a;
    font-size: 14px;
}
.search-row {
    margin-top: 5px;
    padding: 9px 0 0 8px;
    border-top: 1px solid #e6e6e6;
    display: flex;
    align-items: center;
    height: 33px;
}
.search {
    width: 129px;
    height: 23px;
    flex: none;
    border: 1px solid #ccc;
    border-radius: 2px;
    display: flex;
    align-items: center;
    justify-content: space-between;
    padding: 0 4px 0 7px;
    color: #aaa;
}
.funnel {
    margin-left: 4px;
}
.vsep {
    width: 1px;
    height: 18px;
    background: #ddd;
    margin: 0 6px 0 5px;
}
.search-row .caret {
    margin-left: 9px;
}
.tables {
    font-size: 13px;
    font-weight: 700;
    color: #222;
    padding: 7px 0 0 18px;
    height: 27px;
}
.fields {
    list-style: none;
    margin-top: 2px;
}
.fields li {
    height: 21px;
    display: flex;
    align-items: center;
    position: relative;
    padding-left: 22px;
}
.fields li > span {
    position: absolute;
    left: 47px;
    white-space: nowrap;
    color: #444;
}
.fields em {
    letter-spacing: .38px;
}
.fields li.rule {
    height: 1px;
    margin: 1px 14px 0 15px;
    padding: 0;
    background: #ddd;
}
.eq {
    position: absolute;
    left: 17px;
    font-style: normal;
    font-size: 10px;
}
.abc {
    margin-left: -2px;
    font-size: 10px;
    font-weight: 600;
    color: #4e7f98;
}

/* cards column */
.cards {
    width: 154px;
    flex: none;
    margin-left: 6px;
    display: flex;
    flex-direction: column;
    gap: 6px;
}
.card {
    background: #f9f9f9;
    border: 1px solid #d4d4d4;
}
.card h4 {
    padding: 6px 6px 0;
    color: #555;
    font-size: 12px;
}
.pages { height: 62px; }
.filters { height: 101px; }
.marks { height: 282px; }
.mvals {
    height: 124px;
    padding-bottom: 0;
}
.pill {
    height: 20px;
    border-radius: 10px;
    color: #f2fbfd;
    font-size: 12px;
    line-height: 20px;
    padding-left: 11px;
    white-space: nowrap;
    display: flex;
    align-items: center;
}
.blue-pill { background: #4d96b5; }
.green-pill { background: #00b180; }
.sort {
    width: 12px;
    height: 10px;
    margin-left: auto;
    margin-right: 10px;
    color: #fff;
}
.wide {
    width: 144px;
    margin: 0 0 3px 4px;
}
.filters h4 {
    padding-bottom: 9px;
}
.full {
    width: 145px;
    margin: 0 0 3px 3px;
}
.mvals h4 {
    padding: 6px 6px 9px;
}
.marks h4 {
    height: 30px;
    border-bottom: 1px solid #e2e2e2;
}
.marks-body {
    display: flex;
    height: 250px;
}
.marks-main {
    flex: 1;
    min-width: 0;
    display: flex;
    flex-direction: column;
}
.all {
    height: 31px;
    line-height: 28px;
    padding-left: 36px;
    font-size: 13px;
    font-weight: 700;
    color: #222;
    border-bottom: 1px solid #e2e2e2;
}
.mark-type {
    margin: 6px 0 0 6px;
    width: 123px;
    height: 21px;
    flex: none;
    border: 1px solid #ccc;
    border-radius: 2px;
    display: flex;
    align-items: center;
    color: #666;
}
.mark-type span {
    flex: 1;
    text-align: center;
    padding-left: 2px;
}
.mark-type b {
    width: 18px;
    height: 100%;
    border-left: 1px solid #ccc;
    display: flex;
    align-items: center;
    justify-content: center;
}
.mark-btns {
    margin: 6px 0 0 6px;
    width: 124px;
    display: flex;
    flex-wrap: wrap;
    column-gap: 6px;
    row-gap: 6px;
}
.mbtn {
    height: 42px;
    border: 1px solid #d4d4d4;
    display: flex;
    flex-direction: column;
    align-items: center;
    justify-content: flex-end;
    gap: 3px;
    font-size: 11px;
    color: #444;
    padding-bottom: 1px;
}
.m-36 { width: 36px; }
.m-40 { width: 40px; }
.m-35 { width: 35px; }
.m-39 { width: 39px; }
.enc {
    margin: 9px 0 0 12px;
    display: flex;
    align-items: center;
    gap: 5px;
}
.enc-pill {
    width: 94px;
    padding-left: 11px;
}
.enc-pill .sort {
    margin-right: 8px;
}
.mv-card {
    margin-top: auto;
    height: 33px;
    border-top: 1px solid #e2e2e2;
    display: flex;
    align-items: center;
    gap: 12px;
    padding-left: 11px;
    font-size: 13px;
    color: #444;
    white-space: nowrap;
}
.scroll {
    width: 16px;
    display: flex;
    flex-direction: column;
    margin-right: 1px;
    background: #f3f3f3;
}
.up, .down {
    height: 16px;
    position: relative;
}
.up::before, .down::before {
    content: "";
    position: absolute;
    left: 4px;
    top: 5px;
    width: 6px;
    height: 6px;
    border-left: 1.500px solid #555;
    border-top: 1.500px solid #555;
    transform: rotate(45deg);
}
.down::before {
    top: 2px;
    transform: rotate(225deg);
}
.thumb {
    height: 192px;
    background: #c9c9c9;
}
.down {
    margin-top: auto;
}

/* shelves */
.main {
    flex: 1;
    margin-left: 6px;
    margin-right: 6px;
    display: flex;
    flex-direction: column;
    gap: 6px;
    min-width: 0;
}
.shelf {
    height: 28px;
    background: #f9f9f9;
    border: 1px solid #d4d4d4;
    display: flex;
    flex: none;
}
.shelf-label {
    width: 125px;
    border-right: 1px solid #d4d4d4;
    display: flex;
    align-items: center;
    gap: 6px;
    padding: 0 0 2px 7px;
    color: #555;
}
.shelf-pills {
    display: flex;
    align-items: center;
    padding-left: 2px;
    gap: 2px;
}
.first, .second {
    width: 148px;
}
.plus {
    margin-right: 8px;
    flex: none;
}
.left-round { border-radius: 10px 0 0 10px; }
.right-round { border-radius: 0 10px 10px 0; }

/* worksheet */
.stage {
    display: flex;
    gap: 6px;
    flex: 1;
    min-height: 0;
}
.sheet {
    width: 824px;
    height: 520px;
    flex: none;
    background: #e1b48a;
    border: 1px solid #d4d4d4;
    padding: 5px 9px 0;
}
.sheet-title {
    height: 108px;
    padding-left: 5px;
    font-family: "Liberation Serif", serif;
    font-size: 34px;
    font-weight: 700;
    font-style: italic;
    line-height: 47px;
    letter-spacing: .5px;
    color: #7a4300;
    text-shadow: 1px 1px 0 #a79479;
    white-space: nowrap;
}
.title-tight {
    letter-spacing: -.5px;
}
.viz {
    width: 805px;
    height: 396px;
    display: grid;
    grid-template-columns: 59px repeat(12, minmax(0, 1fr)) 59px;
    grid-template-rows: 19px 40px 255px 80px;
    border: 1px solid #bbb;
    background: #dd8a70;
    color: #222;
    font-size: 13px;
}
.vh-corner {
    grid-row: 1 / span 2;
    grid-column: 1;
}
.vh-corner.right {
    grid-column: 14;
    border-left: 1px solid #bbb;
}
.vh-title {
    grid-row: 1;
    grid-column: 2 / span 12;
    text-align: center;
    border-left: 1px solid #bbb;
    border-bottom: 1px solid #bbb;
    font-weight: 700;
    font-size: 11.500px;
    line-height: 19px;
}
.vh-month {
    grid-row: 2;
    border-left: 1px solid #bbb;
    text-align: center;
    font-size: 12px;
    line-height: 16px;
    padding-top: 7px;
    white-space: nowrap;
}
.vh-month.low {
    padding-top: 25px;
}
.axis, .month {
    grid-row: 3;
}
.axis {
    position: relative;
    border-top: 1px solid #bbb;
}
.tick {
    position: absolute;
    right: 8px;
    line-height: 16px;
}
.t600 { top: 23px; }
.t400 { top: 98px; }
.t200 { top: 172px; }
.t0 { top: 238px; }
.axis.right {
    border-left: 1px solid #bbb;
}
.axis.right .tick {
    right: auto;
    left: 7px;
}
.axis-name {
    position: absolute;
    left: 8px;
    top: 108px;
    font-size: 12px;
    writing-mode: vertical-rl;
    transform: rotate(180deg);
}
.axis.right .axis-name {
    left: 36px;
}
.month {
    border-top: 1px solid #bbb;
    border-left: 1px solid #ccc;
    display: flex;
    background-color: #f5ebda;
    background-image: linear-gradient(#fbf8f1, #fbf8f1), linear-gradient(#fbf8f1, #fbf8f1), linear-gradient(#fbf8f1, #fbf8f1);
    background-repeat: no-repeat;
    background-size: 100% 1px;
    background-position: 0 31px, 0 106px, 0 180px;
}
.band {
    flex: 1;
    min-width: 0;
    display: flex;
    align-items: flex-end;
    justify-content: center;
}
.bar {
    width: 14px;
    flex: none;
    position: relative;
}
.bar.a::before, .bar.f::before, .bar.g::before {
    content: "";
    position: absolute;
    top: -3px;
    left: -2px;
    right: -3px;
    height: 3px;
    border-top: 1px solid #111;
    border-bottom: 1px solid #111;
    background: inherit;
}
.a { background: #9c9360; }
.f { background: #3bb6a4; }
.g { background: #e2dc4b; }
.bar.zero {
    width: 19px;
    height: 1px;
    background: #111;
}
.vf-corner, .names {
    grid-row: 4;
    border-top: 1px solid #bbb;
}
.vf-corner.end {
    border-left: 1px solid #bbb;
}
.names {
    border-left: 1px solid #bbb;
    display: flex;
}
.names span {
    flex: 1;
    min-width: 0;
    height: 70px;
    padding-bottom: 5px;
    writing-mode: vertical-rl;
    transform: rotate(180deg);
    line-height: 19px;
    text-align: right;
}

/* legend */
.legend {
    width: 154px;
    height: 92px;
    flex: none;
    background: #f9f9f9;
    border: 1px solid #d4d4d4;
}
.legend h4 {
    height: 31px;
    padding: 6px 7px 0;
    color: #555;
    font-size: 12px;
}
.legend-body {
    height: 59px;
    background: #f5ebda;
}
.leg {
    height: 20px;
    display: flex;
    align-items: flex-start;
    gap: 5px;
    padding-left: 2px;
    color: #222;
    font-size: 13px;
    line-height: 16px;
}
.sw {
    width: 15px;
    height: 14px;
    margin-top: 1px;
}

/* tabs */
.tabs {
    height: 29px;
    flex: none;
    display: flex;
    background: #ebebeb;
    border-top: 1px solid #d4d4d4;
    border-bottom: 1px solid #d4d4d4;
}
.tab {
    width: 200.500px;
    flex: none;
    border-right: 1px solid #ccc;
    padding-left: 6px;
    line-height: 27px;
    color: #666;
    font-size: 12px;
    white-space: nowrap;
    overflow: hidden;
}
.tab.src {
    width: 131px;
    padding-left: 10px;
    display: flex;
    align-items: center;
    gap: 5px;
}
.tab.on {
    background: #fff;
    color: #333;
    font-weight: 700;
    padding-left: 8px;
    width: 199px;
}
.tab.last {
    width: 139px;
}
.tab-btn {
    width: 32px;
    border-right: 1px solid #ccc;
    display: flex;
    align-items: center;
    justify-content: center;
}
.tab-btn:last-child {
    border: 0;
}

/* status bar */
.status {
    height: 21px;
    flex: none;
    display: flex;
    align-items: stretch;
    background: #ebebeb;
    font-size: 11px;
    color: #333;
    line-height: 21px;
    white-space: nowrap;
}
.s1 { width: 67px; padding-left: 3px; }
.s2 { width: 120px; }
.s3 { width: 813px; }
.seg {
    border-left: 1px solid #d8d8d8;
    flex: none;
}
.w126 { width: 126px; }
.w27 { width: 27px; }
.w47 { width: 47px; }
.nav {
    width: 71px;
    display: flex;
    align-items: center;
    justify-content: center;
    gap: 7px;
}
.views {
    flex: 1;
    display: flex;
    align-items: center;
    gap: 5px;
    padding-left: 8px;
}
.v-grid {
    width: 12px;
    height: 12px;
    background: repeating-linear-gradient(90deg, #bdbdbd 0 3px, transparent 3px 4px), #ebebeb;
}
.v-mid {
    width: 12px;
    height: 12px;
    background: #b5b5b5;
}
.v-full {
    width: 10px;
    height: 15px;
    margin-left: 8px;
    background: #777;
}

/* windows taskbar */
.taskbar {
    height: 40px;
    flex: none;
    display: flex;
    background: linear-gradient(90deg, #1f3a47 0, #1f3a46 45%, #1a2b42 70%, #1a2640 100%);
    color: #fff;
}
.start {
    width: 48px;
    display: flex;
    align-items: center;
    justify-content: center;
}
.tsearch {
    width: 344px;
    background: #f2f2f2;
    color: #222;
    display: flex;
    align-items: center;
    gap: 11px;
    padding-left: 11px;
    font-size: 14px;
}
.apps {
    display: flex;
    padding-left: 2px;
}
.tapp {
    width: 49px;
    display: flex;
    align-items: center;
    justify-content: center;
    position: relative;
}
.tapp.open::after, .tapp.active::after {
    content: "";
    position: absolute;
    left: 5px;
    right: 4px;
    bottom: 0;
    height: 2px;
    background: linear-gradient(90deg, #e9f3c4 76%, #a9b386 76%);
}
.tapp.active {
    background: #3a4a5c;
    width: 47px;
}
.tapp.active::after {
    left: 0;
    right: 0;
}
.word {
    font-family: "Liberation Sans", sans-serif;
    font-size: 12px;
    font-weight: 700;
    fill: #fff;
}
.tray {
    margin-left: auto;
    display: flex;
    align-items: center;
    padding-right: 26px;
}
.tray svg {
    margin-right: 10px;
}
.lang {
    font-size: 12px;
    margin: 0 9px 0 -3px;
}
.clock {
    width: 64px;
    display: flex;
    flex-direction: column;
    align-items: center;
    font-size: 12px;
    line-height: 21px;
    white-space: nowrap;
}
.notif {
    margin: 0 0 0 15px !important;
}
```
